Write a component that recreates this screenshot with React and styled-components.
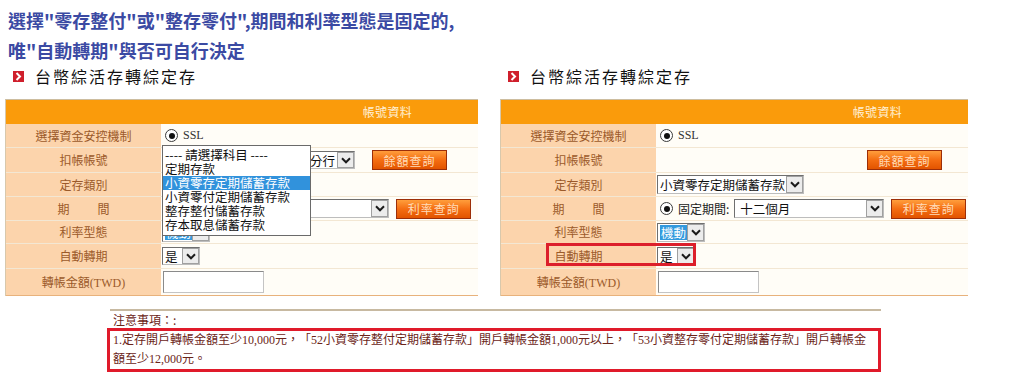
import React from 'react';
import styled, { createGlobalStyle } from 'styled-components';

const GlobalStyle = createGlobalStyle`
  html, body { margin: 0; padding: 0; background: #fff; }
  body {
    font-family: "Noto Sans CJK TC", "Noto Sans", sans-serif;
    text-spacing-trim: space-all;
  }
`;

const Page = styled.div`
  width: 1024px;
  height: 382px;
  overflow: hidden;
  padding-top: 5px;
  box-sizing: border-box;
`;

const Heading = styled.h1`
  margin: 0 0 0 8px;
  font-size: 18px;
  font-weight: 700;
  line-height: 30px;
  color: #3b4aa3;
  font-family: "Noto Sans CJK TC", sans-serif;
`;

const Columns = styled.div`
  display: flex;
  gap: 22px;
  padding-left: 5px;
`;

const Column = styled.section`
  display: flex;
  flex-direction: column;
  width: ${(p) => p.$w}px;
`;

const SectionTitle = styled.h2`
  display: flex;
  align-items: center;
  gap: 11px;
  height: 22px;
  margin: 0 0 12px 8px;
  font-size: 16px;
  font-weight: 400;
  letter-spacing: 2px;
  color: #111;
`;

const Panel = styled.div`
  position: relative;
  border-top: 1px solid #cdbd9f;
  border-left: 1px solid #d8c8ac;
`;

const PanelHeader = styled.div`
  height: 24px;
  background: #fa9b0b;
  color: #fff0d6;
  font-size: 12px;
  line-height: 24px;
  text-align: right;
  padding-right: 66px;
  letter-spacing: 0.3px;
`;

const Row = styled.div`
  position: relative;
  display: grid;
  grid-template-columns: 155px 1fr;
  height: ${(p) => p.$h || 24}px;
  box-sizing: border-box;
  border-bottom: 1px solid ${(p) => (p.$last ? '#e8b27c' : '#f3e7d3')};
`;

const Label = styled.div`
  background: #fcd4ac;
  color: #9b5a2a;
  font-size: 12px;
  display: flex;
  align-items: center;
  justify-content: center;
  gap: ${(p) => p.$gap || 0}px;
  font-family: "Liberation Serif", "Noto Sans CJK TC", serif;
`;

const Value = styled.div`
  background: #fffdf7;
  display: flex;
  align-items: center;
  gap: 5px;
  padding-left: 1px;
  font-size: 12px;
  color: #222;
`;

const Slot = styled.div`
  width: 205px;
  display: flex;
  align-items: center;
  padding-left: 1px;
  box-sizing: border-box;
`;

const Radio = styled.span`
  width: 13px;
  height: 13px;
  margin-left: 3px;
  border-radius: 50%;
  border: 1.5px solid #3a3a3a;
  box-sizing: border-box;
  background: #fff;
  display: inline-flex;
  align-items: center;
  justify-content: center;
  &::after {
    content: '';
    width: 6px;
    height: 6px;
    border-radius: 50%;
    background: #111;
  }
`;

const SerifText = styled.span`
  font-family: "Liberation Serif", serif;
  font-size: 12px;
  color: #333;
`;

const SelectBox = styled.div`
  display: inline-flex;
  align-items: stretch;
  height: ${(p) => p.$h || 18}px;
  width: ${(p) => p.$w}px;
  box-sizing: border-box;
  border: 1px solid #6f6f6f;
  border-right-color: #bdbdbd;
  border-bottom-color: #bdbdbd;
  background: #fff;
  font-size: 12.5px;
  color: #111;
  flex: none;
`;

const SelectText = styled.span`
  flex: 1;
  display: flex;
  align-items: center;
  justify-content: ${(p) => (p.$right ? 'flex-end' : 'flex-start')};
  padding: 0 2px;
  white-space: nowrap;
  overflow: hidden;
`;

const Picked = styled.span`
  background: #3399dd;
  color: #fff;
  padding: 0 1px;
  line-height: 15px;
`;

const ArrowBox = styled.span`
  width: 17px;
  flex: none;
  display: flex;
  align-items: center;
  justify-content: center;
  background: #ececec;
  border: 1px solid #a0a0a0;
  box-sizing: border-box;
`;

const OrangeButton = styled.button`
  flex: none;
  width: 75px;
  height: 20px;
  margin-left: ${(p) => p.$ml || 0}px;
  padding: 0;
  border: 1px solid #9c2e08;
  background: linear-gradient(#ff9e3c, #f46d12 50%, #e25400);
  color: #ffdcb8;
  font-size: 12px;
  letter-spacing: 1px;
  font-family: "Noto Sans CJK TC", sans-serif;
`;

const TextInput = styled.div`
  width: 101px;
  height: 22px;
  box-sizing: border-box;
  border: 1px solid #8a8a8a;
  border-right-color: #c4c4c4;
  border-bottom-color: #c4c4c4;
  background: #fff;
  margin-left: 1px;
`;

const Highlight = styled.div`
  position: absolute;
  left: 45px;
  top: -1px;
  width: 150px;
  height: 23px;
  border: 3px solid #dc1f2b;
  box-sizing: border-box;
  pointer-events: none;
`;

const DropList = styled.ul`
  position: absolute;
  left: 156px;
  top: 45px;
  width: 149px;
  margin: 0;
  padding: 2px 0 3px;
  list-style: none;
  background: #fff;
  border: 1px solid #6a6a6a;
  box-sizing: border-box;
  z-index: 2;
`;

const DropItem = styled.li`
  height: 14px;
  line-height: 14px;
  padding-left: 2px;
  font-size: 12.5px;
  white-space: nowrap;
  color: ${(p) => (p.$active ? '#fff' : '#111')};
  background: ${(p) => (p.$active ? '#3192dc' : 'transparent')};
`;

const Notes = styled.section`
  margin: 13px 0 0 107px;
  width: 774px;
`;

const Rule = styled.hr`
  margin: 0 0 0 3px;
  border: 0;
  border-top: 2px solid #c7b9a1;
`;

const NotesTitle = styled.div`
  padding: 1px 0 0 6px;
  font-size: 12px;
  line-height: 16px;
  color: #6b2418;
`;

const NotesBox = styled.div`
  border: 3px solid #e01a2a;
  padding: 0 3px;
  font-size: 12px;
  line-height: 19px;
  color: #6b2418;
  font-family: "Liberation Serif", "Noto Sans CJK TC", serif;
  text-spacing-trim: space-all;
`;

const NoteLine = styled.span`
  display: block;
  white-space: nowrap;
`;

const Chevron = () => (
  <svg width="10" height="7" viewBox="0 0 10 7">
    <path d="M1 1.3 L5 5.3 L9 1.3" stroke="#1a1a1a" strokeWidth="2" fill="none" />
  </svg>
);

const TitleIcon = () => (
  <svg width="11" height="11" viewBox="0 0 11 11">
    <rect width="11" height="11" fill="#cf1f2c" />
    <path d="M3.5 2 L7 5.5 L3.5 9" stroke="#fff" strokeWidth="2" fill="none" />
  </svg>
);

const Select = ({ w, h, right, children }) => (
  <SelectBox $w={w} $h={h}>
    <SelectText $right={right}>{children}</SelectText>
    <ArrowBox>
      <Chevron />
    </ArrowBox>
  </SelectBox>
);

const options = [
  '---- 請選擇科目 ----',
  '定期存款',
  '小資零存定期儲蓄存款',
  '小資零付定期儲蓄存款',
  '整存整付儲蓄存款',
  '存本取息儲蓄存款',
];

const AccountPanel = ({ showAccountSelect, openList, highlightRenew }) => (
  <Panel>
    <PanelHeader>帳號資料</PanelHeader>
    <Row>
      <Label>選擇資金安控機制</Label>
      <Value>
        <Radio />
        <SerifText>SSL</SerifText>
      </Value>
    </Row>
    <Row $h={25}>
      <Label>扣帳帳號</Label>
      <Value>
        <Slot>{showAccountSelect && <Select w={192} right>分行</Select>}</Slot>
        <OrangeButton>餘額查詢</OrangeButton>
      </Value>
    </Row>
    <Row>
      <Label>定存類別</Label>
      <Value>
        <Select w={147} h={19}>小資零存定期儲蓄存款</Select>
      </Value>
    </Row>
    <Row>
      <Label $gap={28}>
        <span>期</span>
        <span>間</span>
      </Label>
      <Value>
        <Radio />
        <span>固定期間:</span>
        <Select w={150} h={19}>&nbsp;十二個月</Select>
        <OrangeButton $ml={2}>利率查詢</OrangeButton>
      </Value>
    </Row>
    <Row $h={23}>
      <Label>利率型態</Label>
      <Value>
        <Select w={48} h={19}>
          <Picked>機動</Picked>
        </Select>
      </Value>
    </Row>
    <Row $h={25}>
      <Label>自動轉期</Label>
      <Value>
        <Select w={38}>是</Select>
      </Value>
      {highlightRenew && <Highlight />}
    </Row>
    <Row $h={27} $last>
      <Label>轉帳金額(TWD)</Label>
      <Value>
        <TextInput />
      </Value>
    </Row>
    {openList && (
      <DropList>
        {options.map((o, i) => (
          <DropItem key={o} $active={i === 2}>
            {o}
          </DropItem>
        ))}
      </DropList>
    )}
  </Panel>
);

export default function App() {
  return (
    <Page>
      <GlobalStyle />
      <Heading>
        選擇"零存整付"或"整存零付",期間和利率型態是固定的,
        <br />
        唯"自動轉期"與否可自行決定
      </Heading>
      <Columns>
        <Column $w={473}>
          <SectionTitle>
            <TitleIcon />
            台幣綜活存轉綜定存
          </SectionTitle>
          <AccountPanel showAccountSelect openList />
        </Column>
        <Column $w={468}>
          <SectionTitle>
            <TitleIcon />
            台幣綜活存轉綜定存
          </SectionTitle>
          <AccountPanel highlightRenew />
        </Column>
      </Columns>
      <Notes>
        <Rule />
        <NotesTitle>注意事項：:</NotesTitle>
        <NotesBox>
          <NoteLine>
            1.定存開戶轉帳金額至少10,000元，「52小資零存整付定期儲蓄存款」開戶轉帳金額1,000元以上，「53小資整存零付定期儲蓄存款」開戶轉帳金
          </NoteLine>
          <NoteLine>額至少12,000元。</NoteLine>
        </NotesBox>
      </Notes>
    </Page>
  );
}
